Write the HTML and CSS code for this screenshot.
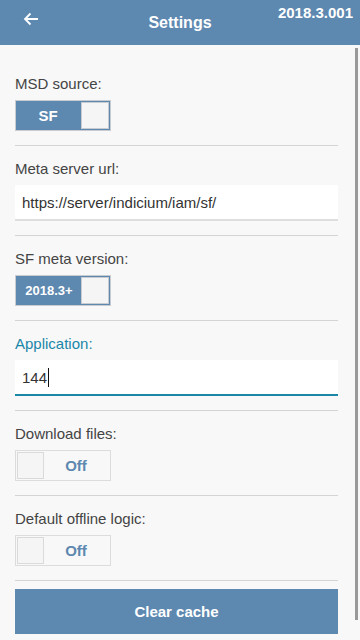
FILE: index.html
```html
<!DOCTYPE html>
<html lang="en">
    <head>
        <meta charset="UTF-8">
        <meta name="viewport" content="width=device-width, initial-scale=1.0">
        <title>Settings</title>
        <link rel="stylesheet" href="styles.css">
    </head>
    <body>
        <div class="header">
            <span class="back">
                <svg width="16" height="14" viewBox="0 0 16 14">
                    <path d="M15 7H2M7.5 1.5L2 7l5.5 5.5" fill="none" stroke="#fff" stroke-width="1.8"/>
                </svg>
            </span>
            <span class="title">Settings</span>
            <span class="version">2018.3.001</span>
        </div>

        <div class="container">
            <div class="field">
                <div class="label">MSD source:</div>
                <div class="toggle on">
                    <span class="toggle-text">SF</span>
                    <span class="knob"></span>
                </div>
            </div>

            <div class="field">
                <div class="label">Meta server url:</div>
                <div class="input">https://server/indicium/iam/sf/</div>
            </div>

            <div class="field">
                <div class="label">SF meta version:</div>
                <div class="toggle on">
                    <span class="toggle-text small">2018.3+</span>
                    <span class="knob"></span>
                </div>
            </div>

            <div class="field focused">
                <div class="label">Application:</div>
                <div class="input">144<span class="caret"></span></div>
            </div>

            <div class="field">
                <div class="label">Download files:</div>
                <div class="toggle off">
                    <span class="knob"></span>
                    <span class="toggle-text">Off</span>
                </div>
            </div>

            <div class="field">
                <div class="label">Default offline logic:</div>
                <div class="toggle off">
                    <span class="knob"></span>
                    <span class="toggle-text">Off</span>
                </div>
            </div>

            <button class="clear">Clear cache</button>
        </div>

        <div class="scrollbar"></div>
    </body>
</html>
```

FILE: styles.css
```css
body {
    margin: 0;
    background-color: #f8f8f8;
    font-family: "Liberation Sans", Arial, sans-serif;
    color: #444;
    overflow: hidden;
}

.header {
    height: 45px;
    background-color: #5d88b0;
    color: #fff;
    display: flex;
    align-items: center;
    justify-content: center;
    position: relative;
}

.back {
    position: absolute;
    left: 23px;
    top: 12px;
}

.title {
    font-size: 16px;
    font-weight: bold;
}

.version {
    position: absolute;
    right: 7px;
    top: 4px;
    font-size: 15px;
    font-weight: bold;
}

.container {
    padding: 17px 22px 0 15px;
}

.field {
    padding: 14px 0;
    border-bottom: 1px solid #d4d4d4;
}

.field:first-child {
    padding-top: 13px;
}

.label {
    font-size: 15px;
    line-height: 18px;
    margin-bottom: 7px;
}

.focused .label {
    color: #1b87a8;
}

.toggle {
    width: 94px;
    height: 29px;
    border: 1px solid #d0d0d0;
    display: flex;
    background-color: #f8f8f8;
}

.toggle.on {
    background-color: #5d88b0;
    border-color: #c8ccd0;
}

.toggle.off {
    border-color: #dcdcdc;
}

.toggle-text {
    flex: 1;
    display: flex;
    align-items: center;
    justify-content: center;
    font-size: 15px;
    font-weight: bold;
    color: #fff;
}

.toggle-text.small {
    font-size: 13px;
    padding-left: 2px;
}

.off .toggle-text {
    color: #5d88b0;
    padding-right: 2px;
}

.knob {
    width: 27px;
    height: 27px;
    margin: 1px;
    background-color: #f5f5f5;
    border: 1px solid #d0d0d0;
    box-sizing: border-box;
}

.on .knob {
    width: 28px;
    border-color: #c8ccd0;
}

.off .knob {
    margin: 1px 0 1px 1px;
    border-color: #dadada;
}

.input {
    height: 34px;
    background-color: #fff;
    border-bottom: 2px solid #dedede;
    padding-left: 7px;
    font-size: 15px;
    color: #333;
    display: flex;
    align-items: center;
}

.focused .input {
    border-bottom-color: #1b87a8;
}

.caret {
    display: inline-block;
    width: 1px;
    height: 19px;
    background-color: #111;
    margin-left: 1px;
}

.clear {
    display: block;
    width: 100%;
    height: 45px;
    margin-top: 8px;
    border: none;
    background-color: #5d88b0;
    color: #fff;
    font-family: inherit;
    font-size: 15px;
    font-weight: bold;
}

.scrollbar {
    position: absolute;
    left: 355px;
    top: 48px;
    width: 3px;
    height: 572px;
    background-color: #999;
}
```
